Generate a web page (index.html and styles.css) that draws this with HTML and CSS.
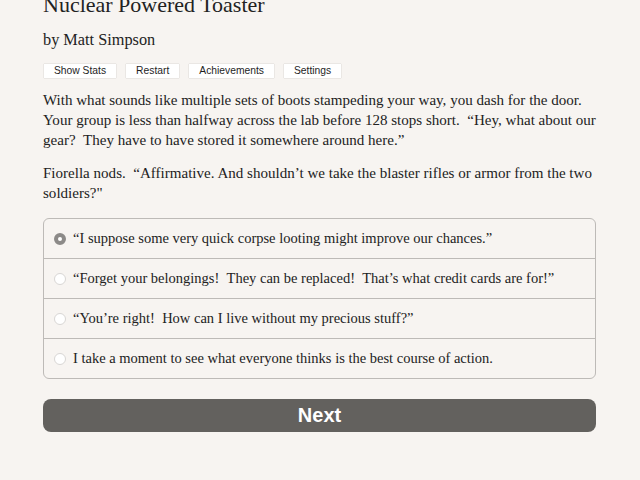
FILE: index.html
```html
<!DOCTYPE html>
<html lang="en">
<head>
  <meta charset="UTF-8" />
  <meta name="viewport" content="width=device-width, initial-scale=1" />
  <title>Nuclear Powered Toaster</title>
  <link rel="stylesheet" href="styles.css">
</head>
<body>

  <div class="container">
    <div class="header">
      <h1>Nuclear Powered Toaster</h1>
      <h2>by Matt Simpson</h2>
      <div class="buttons">
        <button class="small-btn">Show Stats</button>
        <button class="small-btn">Restart</button>
        <button class="small-btn">Achievements</button>
        <button class="small-btn">Settings</button>
      </div>
    </div>

    <div class="text">
      <p>With what sounds like multiple sets of boots stampeding your way, you dash for the door. Your group is less than halfway across the lab before 128 stops short. &nbsp;&ldquo;Hey, what about our gear? &nbsp;They have to have stored it somewhere around here.&rdquo;</p>
      <p>Fiorella nods. &nbsp;&ldquo;Affirmative. And shouldn&rsquo;t we take the blaster rifles or armor from the two soldiers?"</p>
    </div>

    <form>
      <div class="choices">
        <label class="choice">
          <input type="radio" name="choice" value="0" checked />
          <span>&ldquo;I suppose some very quick corpse looting might improve our chances.&rdquo;</span>
        </label>
        <label class="choice">
          <input type="radio" name="choice" value="1" />
          <span>&ldquo;Forget your belongings! &nbsp;They can be replaced! &nbsp;That&rsquo;s what credit cards are for!&rdquo;</span>
        </label>
        <label class="choice">
          <input type="radio" name="choice" value="2" />
          <span>&ldquo;You&rsquo;re right! &nbsp;How can I live without my precious stuff?&rdquo;</span>
        </label>
        <label class="choice">
          <input type="radio" name="choice" value="3" />
          <span>I take a moment to see what everyone thinks is the best course of action.</span>
        </label>
      </div>

      <button type="submit" class="next">Next</button>
    </form>
  </div>

</body>
</html>
```

FILE: styles.css
```css
* {
  margin: 0;
  padding: 0;
  box-sizing: border-box;
}

body {
  background-color: #f7f4f1;
  color: #222;
  font-family: 'Liberation Serif', serif;
}

.container {
  width: 553px;
  margin-left: 43px;
  margin-top: -8px;
}

h1 {
  font-size: 22px;
  font-weight: normal;
  line-height: 26px;
}

h2 {
  font-size: 16.3px;
  font-weight: normal;
  line-height: 20px;
  margin-top: 12px;
}

.buttons {
  display: flex;
  gap: 10px;
  margin-top: 14px;
  padding-left: 1px;
}

.small-btn {
  font-family: 'Liberation Sans', sans-serif;
  font-size: 10.3px;
  color: #1e1e1e;
  background-color: #fff;
  border: none;
  box-shadow: 0 0 1px rgba(0, 0, 0, 0.3);
  height: 14px;
  line-height: 14px;
  padding: 0 10px;
}

.text {
  margin-top: 12px;
  margin-right: -2px;
  font-size: 15.05px;
  line-height: 20px;
}

.text p + p {
  margin-top: 13px;
}

.choices {
  margin-top: 15px;
  border: 1px solid #bdbab7;
  border-radius: 6px;
}

.choice {
  display: flex;
  align-items: center;
  gap: 7px;
  height: 40px;
  padding-left: 10px;
  font-size: 14.5px;
  border-top: 1px solid #bdbab7;
}

.choice:first-child {
  height: 39px;
  border-top: none;
}

.choice input {
  appearance: none;
  width: 12px;
  height: 12px;
  border-radius: 50%;
  border: 1px solid #d8d6d4;
  background-color: #fff;
}

.choice input:checked {
  border: 4px solid #8c8a88;
}

.next {
  display: block;
  width: 100%;
  height: 33px;
  margin-top: 20px;
  background-color: #63615e;
  color: #fff;
  border: none;
  border-radius: 8px;
  font-family: 'Liberation Sans', sans-serif;
  font-size: 20px;
  font-weight: bold;
}
```
